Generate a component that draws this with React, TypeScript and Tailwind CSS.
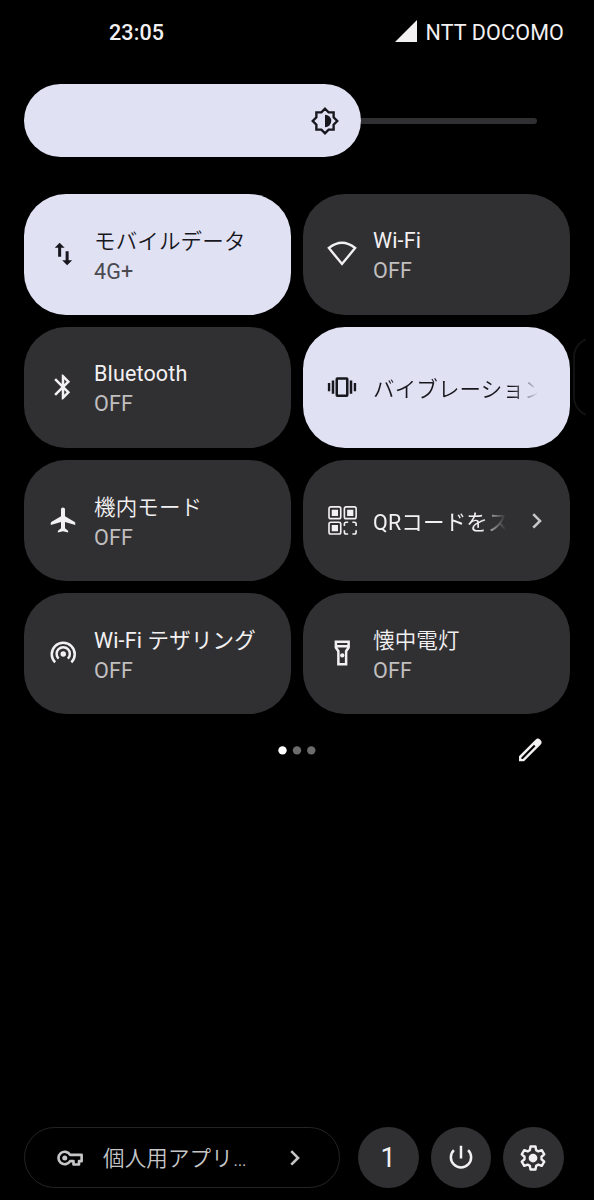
import React from 'react';
import clsx from 'clsx';

interface IconProps {
  children: React.ReactNode;
  className?: string;
}

function Icon({ children, className = 'size-[30px]' }: IconProps) {
  return (
    <svg viewBox="0 0 24 24" fill="currentColor" className={clsx('block shrink-0', className)}>
      {children}
    </svg>
  );
}

const BrightnessIcon = () => (
  <Icon>
    <path
      d="M12 2.2 14.9 5.1H18.9V9.1L21.8 12 18.9 14.9V18.9H14.9L12 21.8 9.1 18.9H5.1V14.9L2.2 12 5.1 9.1V5.1H9.1Z"
      fill="none"
      stroke="currentColor"
      strokeWidth="1.9"
    />
    <path d="M12 7a5 5 0 0 1 0 10z" />
  </Icon>
);

const MobileDataIcon = () => (
  <Icon>
    <path d="M9.3 3 5.4 7h2.7v7.2h2.4V7h2.8z" />
    <path d="M15.3 21l-3.9-4h2.7V9.8h2.4V17h2.8z" />
  </Icon>
);

const WifiIcon = () => (
  <Icon>
    <path d="M1.5 7.2Q12-1.2 22.5 7.2L12 20Z" fill="none" stroke="currentColor" strokeWidth="1.9" />
  </Icon>
);

const BluetoothIcon = () => (
  <Icon>
    <path d="M17.71 7.71 12 2h-1v7.59L6.41 5 5 6.41 10.59 12 5 17.59 6.41 19 11 14.41V22h1l5.71-5.71-4.3-4.29 4.3-4.29zM13 5.83l1.88 1.88L13 9.59V5.83zm1.88 10.46L13 18.17v-3.76l1.88 1.88z" />
  </Icon>
);

const VibrateIcon = () => (
  <Icon>
    <path d="M.7 8.7h1.9v6.6H.7zM3.8 6.7h2v10.6h-2zM18.2 6.7h2v10.6h-2zM21.4 8.7h1.9v6.6h-1.9z" />
    <rect x="7.8" y="5.1" width="8.4" height="13.8" rx=".5" fill="none" stroke="currentColor" strokeWidth="2" />
  </Icon>
);

const AirplaneIcon = () => (
  <Icon>
    <path d="M21.8 16v-1.7c0-.3-.2-.5-.4-.7L13.6 9V3.5c0-.9-.7-1.5-1.6-1.5s-1.6.6-1.6 1.5V9l-7.8 4.6c-.2.2-.4.4-.4.7V16l8.2-2.4v5l-2.2 1.7c-.2.2-.3.3-.3.6V22l4.1-1 4.1 1v-1.1c0-.3-.1-.4-.3-.6l-2.2-1.7v-5z" />
  </Icon>
);

const QrIcon = () => (
  <Icon>
    <g fill="none" stroke="currentColor" strokeWidth="1.3">
      <rect x="1.6" y="1.5" width="9.4" height="9.4" rx="1.4" />
      <rect x="13.9" y="1.5" width="9.4" height="9.4" rx="1.4" />
      <rect x="1.6" y="13.8" width="9.4" height="9.4" rx="1.4" />
      <path d="M13.9 16.8v-1.6q0-1.4 1.4-1.4h1.6M20.3 13.8h1.6q1.4 0 1.4 1.4v1.6M23.3 20.2v1.6q0 1.4-1.4 1.4h-1.6M16.9 23.2h-1.6q-1.4 0-1.4-1.4v-1.6" />
    </g>
    <path d="M3.8 3.7h5v5h-5zM16.1 3.7h5v5h-5zM3.8 16h5v5h-5z" />
  </Icon>
);

const HotspotIcon = () => (
  <Icon>
    <circle cx="12.2" cy="12.8" r="2.2" />
    <g fill="none" stroke="currentColor" strokeWidth="2">
      <path d="M8.5 16.5a5.3 5.3 0 1 1 7.4 0" />
      <path d="M5.7 19.5a9.2 9.2 0 1 1 13 0" />
    </g>
  </Icon>
);

const FlashlightIcon = () => (
  <Icon>
    <path
      d="M7.1 3h10.2v4.6l-2 3v10.4H9.1V10.6l-2-3zM7.2 6.6h10"
      fill="none"
      stroke="currentColor"
      strokeWidth="2"
    />
    <circle cx="12.2" cy="13.9" r="1.7" />
  </Icon>
);

const EditIcon = () => (
  <Icon>
    <path d="M20.2 3.8a2.7 2.7 0 0 0-3.8 0L3.2 17V21h4L20.4 7.8a2.8 2.8 0 0 0-.2-4zM6.3 19.1H5.1v-1.2L15.2 7.8l1.2 1.2z" />
  </Icon>
);

const KeyIcon = () => (
  <Icon>
    <g fill="none" stroke="currentColor" strokeWidth="2.1" strokeLinejoin="round">
      <path d="M12.1 9.5a5 5 0 1 0 0 5h2.7v2.7h4.4v-2.7h2.1v-5z" />
    </g>
    <circle cx="7.8" cy="12" r="2" />
  </Icon>
);

const PowerIcon = () => (
  <Icon>
    <path
      d="M12 2.1v10.2M6.3 5.7a8.1 8.1 0 1 0 11.4 0"
      fill="none"
      stroke="currentColor"
      strokeWidth="2"
    />
  </Icon>
);

const SettingsIcon = () => (
  <Icon>
    <path
      d="M10 2.8h4l.5 2.9 1.8 1 2.7-1 2 3.4L18.8 11v2l2.2 1.9-2 3.4-2.7-1-1.8 1-.5 2.9h-4l-.5-2.9-1.8-1-2.7 1-2-3.4L5.2 13v-2L3 9.1l2-3.4 2.7 1 1.8-1z"
      fill="none"
      stroke="currentColor"
      strokeWidth="1.9"
      strokeLinejoin="round"
    />
    <circle cx="12" cy="12" r="3.5" />
  </Icon>
);

const ChevronIcon = () => (
  <Icon>
    <path d="m9 6.5 5.4 5.4L9 17.3" fill="none" stroke="currentColor" strokeWidth="2.1" />
  </Icon>
);

interface Tile {
  label: string;
  status?: string;
  icon: React.ReactNode;
  active?: boolean;
  chevron?: boolean;
  latin?: boolean;
}

const tiles: Tile[] = [
  { label: 'モバイルデータ', status: '4G+', icon: <MobileDataIcon />, active: true },
  { label: 'Wi-Fi', status: 'OFF', icon: <WifiIcon />, latin: true },
  { label: 'Bluetooth', status: 'OFF', icon: <BluetoothIcon />, latin: true },
  { label: 'バイブレーション', icon: <VibrateIcon />, active: true },
  { label: '機内モード', status: 'OFF', icon: <AirplaneIcon /> },
  { label: 'QRコードをスキャン', icon: <QrIcon />, chevron: true },
  { label: 'Wi-Fi テザリング', status: 'OFF', icon: <HotspotIcon /> },
  { label: '懐中電灯', status: 'OFF', icon: <FlashlightIcon /> }
];

function QuickTile({ label, status, icon, active, chevron, latin }: Tile) {
  return (
    <button
      className={clsx(
        'flex h-[121px] items-center rounded-[42px] pl-6 text-left',
        chevron ? 'pr-[18px]' : 'pr-8',
        active ? 'bg-[#e0e1f3] text-[#17171d]' : 'bg-[#303032] text-[#f3f0f2]'
      )}
    >
      <span className="pb-px">{icon}</span>
      <div className={clsx('ml-4 min-w-0 flex-1', latin ? 'pt-0.5' : 'pt-1')}>
        <p
          className={clsx(
            'h-[30px] overflow-hidden whitespace-nowrap leading-[29px]',
            !/[A-Z]/.test(label) && '[font-weight:350]',
            !status && '[mask-image:linear-gradient(to_right,#000_calc(100%-26px),transparent)]'
          )}
        >
          {label}
        </p>
        {status && (
          <p className={clsx('h-[29px] leading-[29px]', active ? 'text-[#4a4a50]' : 'text-[#c0bebf]')}>
            {status}
          </p>
        )}
      </div>
      {chevron && (
        <span className="ml-4 text-[#c6c6c8]">
          <ChevronIcon />
        </span>
      )}
    </button>
  );
}

export default function App() {
  return (
    <div className="relative flex h-[1200px] w-[594px] flex-col overflow-hidden bg-black font-[Roboto,'Noto_Sans_CJK_JP',sans-serif] text-[21.5px] tracking-[0.15px] text-[#f3f0f2]">
      {/* Status bar */}
      <header className="flex h-16 items-center justify-between pt-[3px] pr-[30px] pl-[109px]">
        <span className="font-medium tracking-[0.1px]">23:05</span>
        <div className="flex items-center gap-2">
          <svg viewBox="0 0 22 22" className="mb-[5px] size-[22px]" fill="currentColor">
            <path d="M22 0v22H0z" />
          </svg>
          <span>NTT DOCOMO</span>
        </div>
      </header>

      {/* Brightness slider */}
      <div className="mt-5 ml-6 flex h-[73px] w-[513px] items-center">
        <div className="flex h-full w-[337px] items-center justify-end rounded-full bg-[#e0e1f3] pr-[21.5px] text-[#17171d]">
          <BrightnessIcon />
        </div>
        <div className="h-1.5 flex-1 rounded-r-full bg-[#303032]" />
      </div>

      {/* Quick settings tiles */}
      <main className="mt-[37px] grid grid-cols-2 gap-3 px-6">
        {tiles.map((tile) => (
          <QuickTile key={tile.label} {...tile} />
        ))}
      </main>

      {/* Page indicator */}
      <div className="mt-[21px] grid h-[30px] grid-cols-3 items-center px-6">
        <span />
        <svg viewBox="0 0 38 10" className="h-2.5 w-[38px] justify-self-center">
          <circle cx="4.5" cy="5.4" r="4.2" fill="#fff" />
          <circle cx="19" cy="5.4" r="4.2" fill="#6c6c6c" />
          <circle cx="33.3" cy="5.4" r="4.2" fill="#6c6c6c" />
        </svg>
        <div className="flex justify-end pr-[25px]">
          <EditIcon />
        </div>
      </div>

      {/* Footer */}
      <footer className="mt-auto mb-3 flex h-[61px] items-center gap-3 pl-6">
        <button className="mr-1.5 flex h-full w-[316px] items-center rounded-full border-[1.5px] border-[#242426] pr-[29px] pl-[30px] text-[#c6c6c8]">
          <KeyIcon />
          <span className="ml-[18px] flex-1 pt-1 text-left [font-weight:350] whitespace-nowrap">個人用アプリ…</span>
          <ChevronIcon />
        </button>
        <button className="flex size-[60.5px] items-center justify-center rounded-full bg-[#303032] pt-0.5 text-[27px]">1</button>
        <button className="flex size-[60.5px] items-center justify-center rounded-full bg-[#303032]">
          <PowerIcon />
        </button>
        <button className="flex size-[60.5px] items-center justify-center rounded-full bg-[#303032]">
          <SettingsIcon />
        </button>
      </footer>

      {/* Edge handle */}
      <div className="absolute top-[337px] left-[573px] h-20 w-[13px] overflow-hidden">
        <div className="h-20 w-12 rounded-[20px] border-2 border-[#121213]" />
      </div>
    </div>
  );
}
